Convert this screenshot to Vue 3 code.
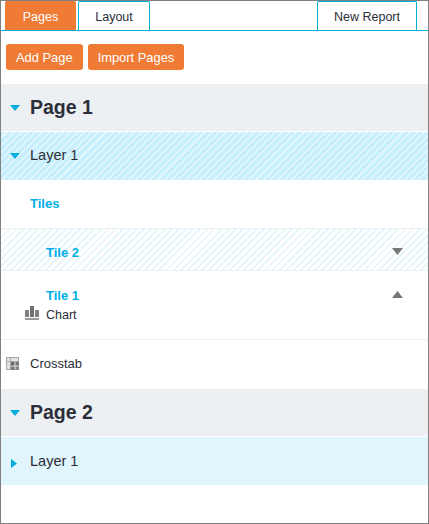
<script setup>
const btns = ["Add Page", "Import Pages"];
</script>

<template>
  <div class="panel">
    <div class="tabs">
      <div class="tab active">Pages</div>
      <div class="tab">Layout</div>
      <div class="tab report">New Report</div>
    </div>

    <div class="actions">
      <button v-for="b in btns" :key="b" class="btn">{{ b }}</button>
    </div>

    <div class="page">
      <svg class="arrow" width="10" height="6" viewBox="0 0 10 6"><path d="M0 0h10L5 6z" /></svg>
      <span>Page 1</span>
    </div>

    <div class="layer hatched">
      <svg class="arrow" width="10" height="6" viewBox="0 0 10 6"><path d="M0 0h10L5 6z" /></svg>
      <span class="layer-name">Layer 1</span>
    </div>

    <div class="tiles">Tiles</div>

    <div class="tile closed">
      <span class="tile-name">Tile 2</span>
      <svg class="caret" width="11" height="7" viewBox="0 0 11 7"><path d="M0 0h11L5.500 7z" /></svg>
    </div>

    <div class="tile open">
      <div class="tile-head">
        <span class="tile-name">Tile 1</span>
        <svg class="caret" width="11" height="7" viewBox="0 0 11 7"><path d="M5.500 0L11 7H0z" /></svg>
      </div>
      <div class="chart">
        <svg width="14" height="14" viewBox="0 0 14 14">
          <rect x="0" y="4" width="4" height="7" fill="#808080" />
          <rect x="5" y="0" width="4" height="11" fill="#707070" />
          <rect x="10" y="4" width="4" height="7" fill="#808080" />
          <rect x="0" y="12" width="14" height="2" fill="#999" />
        </svg>
        <span>Chart</span>
      </div>
    </div>

    <div class="crosstab">
      <svg width="13" height="13" viewBox="0 0 13 13">
        <rect x="0.500" y="0.500" width="12" height="12" fill="#e2e2e2" stroke="#a8a8a8" />
        <rect x="5" y="5" width="3.500" height="3.500" fill="#666" />
        <rect x="9.500" y="5" width="3.500" height="3.500" fill="#777" />
        <rect x="5" y="9.500" width="3.500" height="3.500" fill="#777" />
        <rect x="9.500" y="9.500" width="3.500" height="3.500" fill="#888" />
        <path d="M4.500 1v11M1 4.500h11" stroke="#a8a8a8" />
      </svg>
      <span>Crosstab</span>
    </div>

    <div class="page second">
      <svg class="arrow" width="10" height="6" viewBox="0 0 10 6"><path d="M0 0h10L5 6z" /></svg>
      <span>Page 2</span>
    </div>

    <div class="layer plain">
      <svg class="arrow side" width="6" height="9" viewBox="0 0 6 9"><path d="M0 0l6 4.500-6 4.500z" /></svg>
      <span class="layer-name">Layer 1</span>
    </div>
  </div>
</template>

<style scoped>
.panel {
  box-sizing: border-box;
  width: 429px;
  height: 524px;
  border: 1px solid #808080;
  background: #fff;
  font-family: "Liberation Sans", Arial, sans-serif;
  color: #2b2e38;
  overflow: hidden;
}

.tabs {
  display: flex;
  height: 30px;
  padding-left: 4px;
  padding-right: 11px;
  gap: 2px;
  border-bottom: 1px solid #00b0e0;
  box-sizing: border-box;
}

.tab {
  box-sizing: border-box;
  width: 72px;
  height: 29px;
  border: 1px solid #00b0e0;
  border-bottom: none;
  border-radius: 2px 2px 0 0;
  font-size: 12.500px;
  line-height: 31px;
  text-align: center;
}

.tab.active {
  width: 71px;
  background: #f07b35;
  border-color: #f07b35;
  color: #fff;
}

.tab.report {
  width: 100px;
  margin-left: auto;
}

.actions {
  display: flex;
  gap: 5px;
  padding: 13px 5px 14px;
}

.btn {
  height: 26px;
  padding: 0 10px;
  border: none;
  border-radius: 3px;
  background: #f07b35;
  color: #fff;
  font-family: inherit;
  font-size: 12.900px;
}

.page {
  display: flex;
  align-items: center;
  height: 47px;
  background: #edf0f3;
  font-size: 19.500px;
  font-weight: bold;
  margin-bottom: 1px;
}

.arrow {
  margin-left: 9px;
  margin-right: 10px;
  fill: #00aee0;
  flex: none;
}

.arrow.side {
  margin-left: 10px;
  margin-right: 13px;
  margin-top: 4px;
}

.layer {
  display: flex;
  align-items: center;
  height: 48px;
  font-size: 14.500px;
}

.hatched .layer-name {
  margin-bottom: 2px;
}

.hatched {
  background: repeating-linear-gradient(135deg, #c8effd 0 3.500px, #e4f8fe 3.500px 5px);
}

.plain {
  background: #e1f5fc;
}

.tiles {
  height: 48px;
  line-height: 47px;
  padding-left: 29px;
  font-size: 13px;
  font-weight: bold;
  color: #00aee8;
}

.tile-name {
  font-size: 13px;
  font-weight: bold;
  color: #00aee8;
}

.tile {
  box-sizing: border-box;
  padding-left: 45px;
  padding-right: 25px;
}

.closed {
  display: flex;
  align-items: center;
  justify-content: space-between;
  height: 43px;
  padding-top: 5px;
  border-top: 1px solid #eef2f4;
  border-bottom: 1px solid #eef2f4;
  background: repeating-linear-gradient(135deg, #e6f6fc 0 2px, #fff 2px 5px);
}

.closed .caret {
  margin-bottom: 2px;
}

.open {
  height: 69px;
  padding-top: 17px;
  border-bottom: 1px solid #eef0f2;
}

.tile-head {
  display: flex;
  align-items: flex-start;
  justify-content: space-between;
  height: 16px;
}

.tile-head .caret {
  margin-top: 3px;
}

.caret {
  fill: #777;
  flex: none;
}

.chart {
  display: flex;
  align-items: center;
  gap: 7px;
  margin-left: -21px;
  font-size: 12.500px;
  height: 22px;
}

.chart svg {
  margin-bottom: 4px;
}

.crosstab {
  display: flex;
  align-items: center;
  gap: 11px;
  box-sizing: border-box;
  height: 49px;
  padding-left: 5px;
  padding-bottom: 3px;
  font-size: 13px;
}
</style>

<style>
html, body { margin: 0; }
</style>
